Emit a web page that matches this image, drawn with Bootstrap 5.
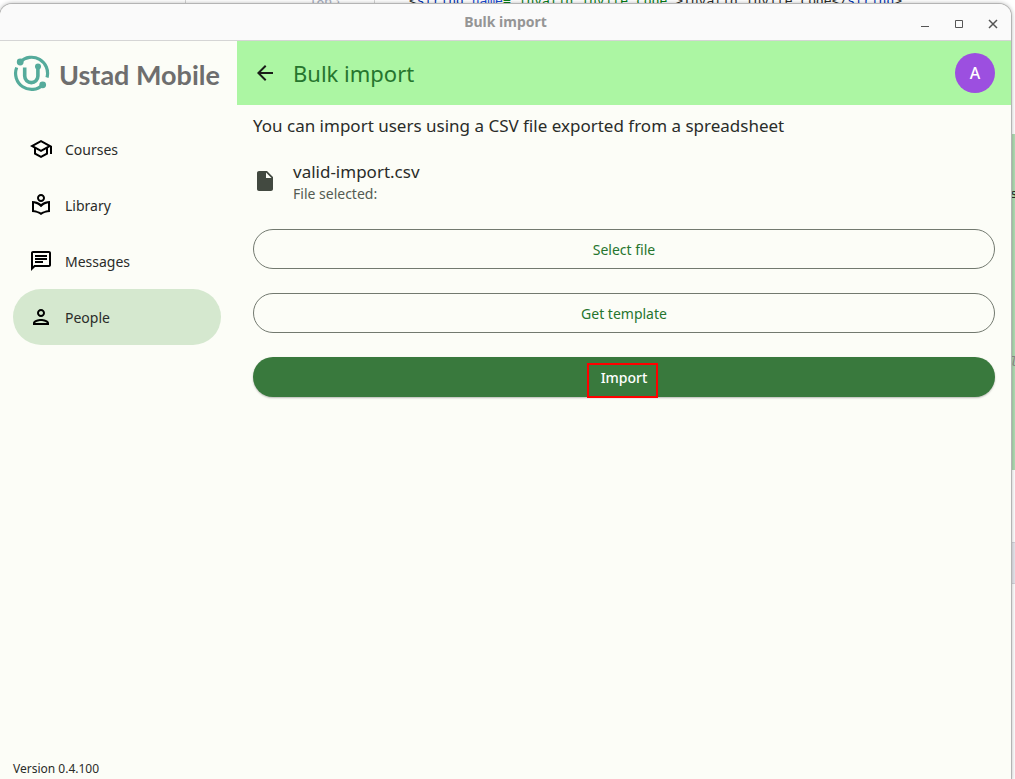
<!DOCTYPE html>
<html lang="en">
<head>
<meta charset="utf-8">
<meta name="viewport" content="width=device-width, initial-scale=1">
<title>Bulk import</title>
<link rel="stylesheet" href="https://cdn.jsdelivr.net/npm/bootstrap@5.3.0/dist/css/bootstrap.min.css">
<style>
  body { font-family: "Noto Sans", sans-serif; font-size: 14px; line-height: 20px; color: #2a2c29; background: #f4f4f4; }
  .desktop { padding: 4px 4px 0 0; }
  /* editor behind the window */
  .editor { inset: 0; font: 13px/16px "DejaVu Sans Mono", monospace; }
  .editor-line { top: -7px; left: 0; right: 0; white-space: pre; }
  .editor-tree { width: 186px; border-right: 1px solid #d4d4d4; }
  .editor-gutter { width: 189px; padding-right: 34px; border-right: 1px solid #d4d4d4; color: #a9b0bf; }
  .editor-code { padding-left: 34px; }
  .editor-side { top: 0; right: 0; width: 5px; padding-top: 134px; }
  .editor-diff { height: 336px; background: #b0dcb3; padding-top: 52px; }
  .editor-band { height: 42px; margin-top: 72px; background: #e6e6ec; border: solid #d4d4da; border-width: 1px 0; }
  .editor-note { margin-top: 152px; color: #8c8c8c; font-style: italic; }
  .tag { color: #0033b3; } .attr { color: #174ad4; } .val { color: #067d17; }
  .app-window { border-radius: 12px 12px 0 0; background: #fcfdf7; box-shadow: 0 0 0 1px #b4b4b4, 0 0 4px 1px #0004; }
  .titlebar { height: 37px; background: #fafafa; border-bottom: 1px solid #d5d5d5; color: #959595; font-weight: 700; }
  .win-btn { width: 34px; height: 36px; color: #555; }
  .win-controls { right: 1px; }
  .sidebar { width: 237px; }
  .brand { height: 64px; padding: 0 13px; color: #6e6e6e; font: 700 27px/32px Lato, sans-serif; }
  .brand-text { margin-left: 9px; padding-top: 3px; }
  .menu { margin-top: 16px; padding: 0 16px 0 13px; }
  .menu-item { height: 56px; border-radius: 28px; padding: 0 16px; gap: 12px; color: #2a2c29; text-decoration: none; }
  .menu-item svg { color: #000; }
  .menu-item span { padding-top: 2px; }
  .menu-item.active { background: #d5e8cf; }
  .version { padding: 0 13px 1px; font-size: 12px; line-height: 18px; }
  .appbar { height: 64px; padding: 0 16px; background: #acf6a3; }
  .appbar h1 { font-size: 22px; line-height: 28px; margin: 0 0 0 16px; color: #26752e; }
  .avatar { width: 40px; height: 40px; background: #9c4fe0; font-size: 16px; font-weight: 500; }
  .content { padding: 8px 16px; }
  .body-text { font-size: 17px; line-height: 26px; }
  .file-row { margin-top: 20px; height: 52px; gap: 16px; }
  .file-row svg { color: #424940; margin-top: 10px; }
  .file-status { color: #545b52; line-height: 18px; }
  .actions { gap: 24px; margin-top: 18px; }
  .btn-wide { height: 40px; padding: 2px 0 0; font-size: 14px; line-height: 20px; }
  .btn-line { border: 1px solid #72796f; color: #26752e; }
  .btn-fill { background: #39793d; border: 0; color: #fff; font-weight: 500; box-shadow: 0 1px 2px #0004; }
  .highlight { width: 71px; height: 35px; top: 6px; left: 50%; margin-left: -37px; border: 2px solid #f00; pointer-events: none; }
</style>
</head>
<body>
<div class="desktop position-relative vh-100 overflow-hidden d-flex">
  <div class="editor position-absolute overflow-hidden bg-white" aria-hidden="true">
    <div class="editor-line position-absolute d-flex"><div class="editor-tree"></div><div class="editor-gutter text-end">1863</div><div class="editor-code">&lt;<span class="tag">string</span> <span class="attr">name</span><span class="val">="invalid_invite_code"</span>&gt;Invalid invite code&lt;/<span class="tag">string</span>&gt;</div></div>
    <div class="editor-side position-absolute">
      <div class="editor-diff">s<div class="editor-note">l</div></div>
      <div class="editor-band"></div>
    </div>
  </div>
  <div class="app-window position-relative flex-fill d-flex flex-column overflow-hidden">
    <header class="titlebar d-flex align-items-center flex-shrink-0">
      <div class="flex-fill text-center">Bulk import</div>
      <div class="win-controls position-absolute d-flex">
        <button class="win-btn btn p-0 border-0" aria-label="Minimize"><svg width="12" height="12" viewBox="0 0 12 12"><path d="M2 8.500h8" stroke="currentColor"/></svg></button>
        <button class="win-btn btn p-0 border-0" aria-label="Maximize"><svg width="12" height="12" viewBox="0 0 12 12"><path d="M2.500 2.500h7v7h-7z" fill="none" stroke="currentColor"/></svg></button>
        <button class="win-btn btn p-0 border-0" aria-label="Close"><svg width="12" height="12" viewBox="0 0 12 12"><path d="M2 2l8 8M10 2l-8 8" stroke="currentColor" stroke-width="1.500"/></svg></button>
      </div>
    </header>
    <div class="d-flex flex-fill">
      <aside class="sidebar d-flex flex-column flex-shrink-0">
        <div class="brand d-flex align-items-center text-nowrap">
          <svg width="37" height="37" viewBox="13 55 37 37" fill="none" stroke="#55ab9b" stroke-width="3.200" aria-hidden="true">
            <path d="M20.200 62A16 16 0 0 1 47 77.500M42.800 84.800A16 16 0 0 1 16.700 67.500"/>
            <path d="M24.700 67.500v8.500a6.600 6.600 0 0 0 13.200 0v-9" stroke-width="3.600"/>
            <g fill="#55ab9b" stroke="none"><circle cx="20.200" cy="62" r="3.400"/><circle cx="38" cy="66.500" r="3"/><circle cx="42.700" cy="84.800" r="3.400"/></g>
          </svg>
          <span class="brand-text">Ustad Mobile</span>
        </div>
        <nav class="menu d-flex flex-column">
          <a class="menu-item d-flex align-items-center" href="#"><svg width="24" height="24" viewBox="0 0 24 24" fill="currentColor"><path d="M12 3 1 9l4 2.180v6L12 21l7-3.820v-6l2-1.090V17h2V9L12 3zm6.820 6L12 12.720 5.180 9 12 5.280 18.820 9zM17 15.990l-5 2.730-5-2.730v-3.720L12 15l5-2.730v3.720z"/></svg><span>Courses</span></a>
          <a class="menu-item d-flex align-items-center" href="#"><svg width="24" height="24" viewBox="0 0 24 24" fill="currentColor"><path d="M16 5c0-2.210-1.790-4-4-4S8 2.790 8 5s1.790 4 4 4 4-1.790 4-4zm-4 2c-1.100 0-2-.9-2-2s.9-2 2-2 2 .9 2 2-.9 2-2 2zm0 4C9.640 8.990 6.480 8 3 8v11c3.480 0 6.640.990 9 3 2.360-2.010 5.520-3 9-3V8c-3.480 0-6.640.990-9 3zm7 6.130c-2.530.340-4.930 1.190-7 2.480-2.070-1.290-4.470-2.140-7-2.480v-6.950c2.100.380 4.050 1.350 5.640 2.830L12 14.280l1.360-1.270c1.590-1.480 3.540-2.450 5.640-2.830v6.950z"/></svg><span>Library</span></a>
          <a class="menu-item d-flex align-items-center" href="#"><svg width="24" height="24" viewBox="0 0 24 24" fill="currentColor"><path d="M4 4h16v12H5.170L4 17.170V4m0-2c-1.100 0-1.990.9-1.990 2L2 22l4-4h14c1.100 0 2-.9 2-2V4c0-1.100-.9-2-2-2H4zm2 10h8v2H6v-2zm0-3h12v2H6V9zm0-3h12v2H6V6z"/></svg><span>Messages</span></a>
          <a class="menu-item active d-flex align-items-center" href="#" aria-current="page"><svg width="24" height="24" viewBox="0 0 24 24" fill="currentColor"><path d="M12 6c1.100 0 2 .9 2 2s-.9 2-2 2-2-.9-2-2 .9-2 2-2m0 10c2.700 0 5.800 1.290 6 2H6c.230-.720 3.310-2 6-2m0-12C9.790 4 8 5.790 8 8s1.790 4 4 4 4-1.790 4-4-1.790-4-4-4zm0 10c-2.670 0-8 1.340-8 4v2h16v-2c0-2.660-5.330-4-8-4z"/></svg><span>People</span></a>
        </nav>
        <div class="version mt-auto">Version 0.4.100</div>
      </aside>
      <main class="flex-fill">
        <div class="appbar d-flex align-items-center">
          <button class="btn p-0 border-0 d-flex" aria-label="Back"><svg width="24" height="24" viewBox="0 0 24 24" fill="#1a1c19"><path d="M20 11H7.830l5.590-5.590L12 4l-8 8 8 8 1.410-1.410L7.830 13H20v-2z"/></svg></button>
          <h1 class="fw-normal">Bulk import</h1>
          <button class="avatar btn rounded-circle p-0 border-0 ms-auto text-white">A</button>
        </div>
        <div class="content">
          <p class="body-text mb-0">You can import users using a CSV file exported from a spreadsheet</p>
          <div class="file-row d-flex">
            <svg width="24" height="24" viewBox="0 0 24 24" fill="currentColor" aria-hidden="true"><path d="M6 2c-1.100 0-1.990.9-1.990 2L4 20c0 1.100.890 2 1.990 2H18c1.100 0 2-.9 2-2V8l-6-6H6zm7 7V3.500L18.500 9H13z"/></svg>
            <div><div class="body-text">valid-import.csv</div><div class="file-status">File selected:</div></div>
          </div>
          <div class="actions d-grid">
            <button class="btn btn-wide btn-line rounded-pill">Select file</button>
            <button class="btn btn-wide btn-line rounded-pill">Get template</button>
            <div class="position-relative d-grid">
              <button class="btn btn-wide btn-fill rounded-pill">Import</button>
              <span class="highlight position-absolute"></span>
            </div>
          </div>
        </div>
      </main>
    </div>
  </div>
</div>
<script src="https://cdn.jsdelivr.net/npm/bootstrap@5.3.0/dist/js/bootstrap.bundle.min.js"></script>
</body>
</html>
